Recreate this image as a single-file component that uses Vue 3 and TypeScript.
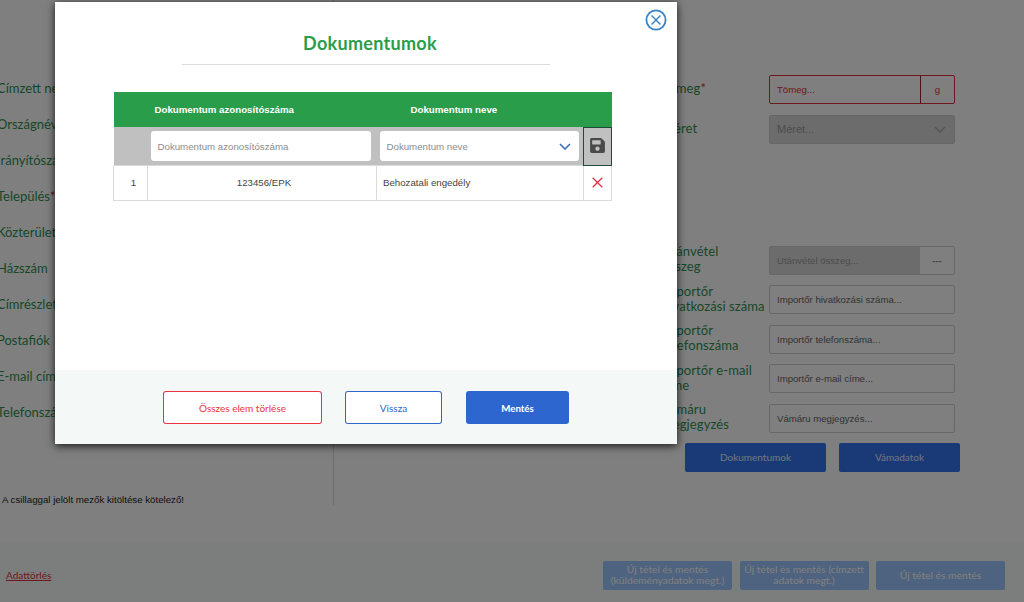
<script setup lang="ts">
const leftLabels = [
  'Címzett neve',
  'Országnév',
  'Irányítószám',
  'Település',
  'Közterület',
  'Házszám',
  'Címrészlet',
  'Postafiók',
  'E-mail cím',
  'Telefonszám',
]

const lowerFields = [
  { label: 'Importőr\nhivatkozási száma', placeholder: 'Importőr hivatkozási száma...' },
  { label: 'Importőr\ntelefonszáma', placeholder: 'Importőr telefonszáma...' },
  { label: 'Importőr e-mail\ncíme', placeholder: 'Importőr e-mail címe...' },
  { label: 'Vámáru\nmegjegyzés', placeholder: 'Vámáru megjegyzés...' },
]
</script>

<template>
  <div class="page">
    <main class="form">
      <section class="left-col">
        <div v-for="label in leftLabels" :key="label" class="left-row">
          {{ label }}<span v-if="label === 'Település'" class="star">*</span>
        </div>
        <p class="required-note">A csillaggal jelölt mezők kitöltése kötelező!</p>
      </section>

      <section class="right-col">
        <div class="field-row">
          <label class="field-label">Tömeg<span class="star">*</span></label>
          <div class="field field-error">
            <span class="field-text">Tömeg...</span>
            <span class="unit">g</span>
          </div>
        </div>
        <div class="field-row">
          <label class="field-label">Méret</label>
          <div class="field field-disabled">
            <span class="field-text">Méret...</span>
            <svg class="field-chevron" width="12" height="7" viewBox="0 0 12 7">
              <path d="M1 1l5 5 5-5" fill="none" stroke="currentColor" stroke-width="1.4" />
            </svg>
          </div>
        </div>

        <div class="field-row field-row-gap">
          <label class="field-label">{{ 'Utánvétel\nösszeg' }}</label>
          <div class="field">
            <span class="field-text field-text-disabled">Utánvétel összeg...</span>
            <span class="unit unit-plain">---</span>
          </div>
        </div>
        <div v-for="f in lowerFields" :key="f.label" class="field-row">
          <label class="field-label">{{ f.label }}</label>
          <div class="field">
            <span class="field-text">{{ f.placeholder }}</span>
          </div>
        </div>

        <div class="side-actions">
          <button class="btn-dark btn-docs">Dokumentumok</button>
          <button class="btn-dark btn-customs">Vámadatok</button>
        </div>
      </section>
    </main>

    <footer class="page-footer">
      <a class="delete-link">Adattörlés</a>
      <div class="footer-actions">
        <button class="btn-faded">Új tétel és mentés (küldeményadatok megt.)</button>
        <button class="btn-faded">Új tétel és mentés (címzett adatok megt.)</button>
        <button class="btn-faded">Új tétel és mentés</button>
      </div>
    </footer>

    <div class="overlay"></div>

    <div class="modal">
      <button class="close" aria-label="Bezárás">
        <svg width="22" height="22" viewBox="0 0 22 22">
          <circle cx="11" cy="11" r="9.6" fill="none" stroke="#3a84c4" stroke-width="1.8" />
          <path d="M6.6 6.6l8.8 8.8M15.4 6.6l-8.8 8.8" fill="none" stroke="#3a84c4" stroke-width="1.4" />
        </svg>
      </button>

      <div class="modal-body">
        <h2 class="modal-title">Dokumentumok</h2>

        <table class="docs">
          <colgroup>
            <col style="width: 34px" />
            <col style="width: 229px" />
            <col style="width: 207px" />
            <col style="width: 28px" />
          </colgroup>
          <thead>
            <tr class="head-row">
              <th></th>
              <th class="th-id">Dokumentum azonosítószáma</th>
              <th class="th-name">Dokumentum neve</th>
              <th></th>
            </tr>
          </thead>
          <tbody>
            <tr class="filter-row">
              <td></td>
              <td class="filter-cell">
                <div class="filter-input filter-first">Dokumentum azonosítószáma</div>
              </td>
              <td class="filter-cell">
                <div class="filter-input filter-select">
                  Dokumentum neve
                  <svg width="12" height="7" viewBox="0 0 12 7">
                    <path d="M1 1l5 5 5-5" fill="none" stroke="#3d6cb8" stroke-width="1.6" />
                  </svg>
                </div>
              </td>
              <td class="save-cell">
                <svg width="15" height="17" viewBox="0 0 448 512">
                  <path
                    fill="#4a4a4a"
                    d="M433.941 129.941l-83.882-83.882A48 48 0 0 0 316.118 32H48C21.49 32 0 53.49 0 80v352c0 26.51 21.49 48 48 48h352c26.51 0 48-21.49 48-48V163.882a48 48 0 0 0-14.059-33.941zM224 416c-35.346 0-64-28.654-64-64 0-35.346 28.654-64 64-64s64 28.654 64 64c0 35.346-28.654 64-64 64zm96-304.52V212c0 6.627-5.373 12-12 12H76c-6.627 0-12-5.373-12-12V108c0-6.627 5.373-12 12-12h228.52c3.183 0 6.235 1.264 8.485 3.515l3.48 3.48A11.996 11.996 0 0 1 320 111.48z"
                  />
                </svg>
              </td>
            </tr>
            <tr class="data-row">
              <td class="center cell-index">1</td>
              <td class="center cell-shift">123456/EPK</td>
              <td class="cell-name">Behozatali engedély</td>
              <td class="center">
                <svg class="remove" width="11" height="11" viewBox="0 0 11 11">
                  <path d="M.7.7l9.6 9.6M10.3.7L.7 10.3" fill="none" stroke="#e0303f" stroke-width="1.3" />
                </svg>
              </td>
            </tr>
          </tbody>
        </table>
      </div>

      <div class="modal-footer">
        <button class="btn btn-danger">Összes elem törlése</button>
        <button class="btn btn-back">Vissza</button>
        <button class="btn btn-save">Mentés</button>
      </div>
    </div>
  </div>
</template>

<style>
html,
body {
  margin: 0;
  overflow: hidden;
}
</style>

<style scoped>
.page {
  position: relative;
  width: 1024px;
  height: 602px;
  overflow: hidden;
  display: flex;
  flex-direction: column;
  background: #ffffff;
  font-family: 'Lato', 'Liberation Sans', sans-serif;
}

/* ---- háttér űrlap ---- */
.form {
  display: flex;
  height: 543px;
}

.left-col {
  width: 337px;
  height: 505px;
  box-sizing: border-box;
  margin-left: -3px;
  padding-top: 70px;
  border-right: 1px solid #d8d8d8;
  flex-shrink: 0;
}

.left-row {
  height: 36px;
  line-height: 36px;
  font-size: 13px;
  color: #2f8f50;
  white-space: nowrap;
}

.star {
  color: #e0303f;
}

.required-note {
  margin: 64px 0 0 5px;
  font-family: 'Liberation Sans', Arial, sans-serif;
  font-size: 9.7px;
  color: #222;
}

.right-col {
  margin-left: 328px;
  padding-top: 75px;
  width: 310px;
}

.field-row {
  display: flex;
  align-items: center;
  height: 29px;
  margin-bottom: 10.5px;
}

.field-row-gap {
  margin-top: 102px;
}

.field-label {
  width: 107px;
  flex-shrink: 0;
  padding-bottom: 2px;
  font-size: 13px;
  line-height: 15px;
  letter-spacing: 0.1px;
  color: #2f8f50;
  white-space: pre-line;
}

.field {
  width: 186px;
  height: 29px;
  box-sizing: border-box;
  display: flex;
  align-items: center;
  background: #ffffff;
  border: 1px solid #cfcfcf;
  border-radius: 2px;
  font-family: 'Liberation Sans', Arial, sans-serif;
  font-size: 9.6px;
  color: #666;
}

.field-text {
  flex: 1;
  align-self: stretch;
  display: flex;
  align-items: center;
  padding-left: 7px;
}

.field-error {
  border-color: #e0303f;
  color: #d8303f;
}

.field-disabled {
  background: #d8d8d8;
  color: #999;
  font-size: 11px;
}

.field-chevron {
  margin-right: 8px;
  color: #aaa;
}

.field-text-disabled {
  background: #d8d8d8;
  color: #999;
}

.unit {
  width: 33px;
  height: 100%;
  flex-shrink: 0;
  display: flex;
  align-items: center;
  justify-content: center;
  border-left: 1px solid #a02030;
}

.unit-plain {
  border-left: 0;
  width: 34px;
  font-weight: bold;
  color: #888;
}

.side-actions {
  display: flex;
  gap: 13px;
  margin: -0.5px 0 0 23px;
}

.btn-dark {
  height: 29px;
  border: 0;
  border-radius: 2px;
  background: #3572ee;
  color: #e4ecf8;
  font-family: 'Lato', sans-serif;
  font-size: 10px;
  padding: 0;
}

.btn-docs {
  width: 141px;
}

.btn-customs {
  width: 121px;
}

.page-footer {
  flex: 1;
  display: flex;
  align-items: center;
  justify-content: space-between;
  padding: 5px 19px 0 6px;
  background: #f8fbfa;
}

.delete-link {
  font-size: 10px;
  color: #e0303f;
  text-decoration: underline;
}

.footer-actions {
  display: flex;
  gap: 7.5px;
}

.btn-faded {
  width: 129px;
  height: 29px;
  padding: 0 4px;
  border: 0;
  border-radius: 2px;
  background: #9cc6ff;
  color: #ffffff;
  font-family: 'Lato', sans-serif;
  font-size: 10.3px;
  line-height: 11px;
}

.overlay {
  position: absolute;
  inset: 0;
  background: rgba(0, 0, 0, 0.5);
}

/* ---- modal ---- */
.modal {
  position: absolute;
  left: 55px;
  top: 2px;
  width: 622px;
  height: 442px;
  display: flex;
  flex-direction: column;
  background: #ffffff;
  box-shadow: 0 2px 8px rgba(0, 0, 0, 0.8);
}

.close {
  position: absolute;
  top: 7px;
  right: 10px;
  width: 22px;
  height: 22px;
  padding: 0;
  border: 0;
  background: none;
}

.modal-body {
  flex: 1;
  padding: 0 66px 0 59px;
}

.modal-title {
  width: 368px;
  box-sizing: border-box;
  margin: 30px 0 27px 68px;
  padding: 0 0 9px 8px;
  border-bottom: 1px solid #dcdcdc;
  text-align: center;
  font-size: 18px;
  line-height: 23px;
  font-weight: 700;
  letter-spacing: 0.3px;
  color: #2a9d4a;
}

.docs {
  width: 498px;
  margin-left: -1px;
  table-layout: fixed;
  border-collapse: collapse;
  font-family: 'Liberation Sans', Arial, sans-serif;
  font-size: 9.7px;
}

.head-row {
  height: 35px;
  background: #2a9d4a;
  color: #ffffff;
}

.head-row th {
  padding: 0;
  text-align: left;
  font-size: 9.7px;
  font-weight: 700;
}

.th-id {
  padding-left: 7px !important;
}

.th-name {
  padding-left: 34px !important;
}

.filter-row {
  height: 38px;
  background: #c0c0c0;
}

.filter-row td {
  padding: 0;
}

.filter-cell {
  vertical-align: middle;
  padding-top: 1px !important;
}

.filter-input {
  height: 30px;
  box-sizing: border-box;
  display: flex;
  align-items: center;
  background: #ffffff;
  border-radius: 3px;
  color: #8c8c8c;
  padding-left: 7px;
}

.filter-first {
  width: 220px;
  margin-left: 3px;
}

.filter-select {
  width: 199px;
  margin-left: 3px;
  justify-content: space-between;
  padding-right: 8px;
}

.save-cell {
  border: 1px solid #1f4a38;
  text-align: center;
  vertical-align: middle;
}

.data-row {
  height: 35px;
  color: #444;
}

.data-row td {
  padding: 0;
  border: 1px solid #dadada;
}

.center {
  text-align: center;
}

.cell-index {
  padding-left: 6px !important;
}

.cell-shift {
  padding-left: 4px !important;
}

.cell-name {
  padding-left: 6px !important;
}

.remove {
  vertical-align: middle;
}

.modal-footer {
  height: 74px;
  box-sizing: border-box;
  display: flex;
  align-items: flex-start;
  padding: 21px 0 0 108px;
  background: #f4f9f8;
}

.btn {
  height: 33px;
  box-sizing: border-box;
  border: 0;
  border-radius: 3px;
  font-family: 'Lato', sans-serif;
  font-size: 10px;
  padding: 0;
}

.btn-danger {
  width: 159px;
  margin-right: 23px;
  background: #ffffff;
  box-shadow: inset 0 0 0 1px #e8343f;
  color: #e8343f;
}

.btn-back {
  width: 97px;
  margin-right: 24px;
  background: #ffffff;
  box-shadow: inset 0 0 0 1px #2e66cf;
  color: #2e66cf;
}

.btn-save {
  width: 103px;
  background: #2e66cf;
  color: #ffffff;
  font-size: 9.7px;
  font-weight: 700;
}
</style>
